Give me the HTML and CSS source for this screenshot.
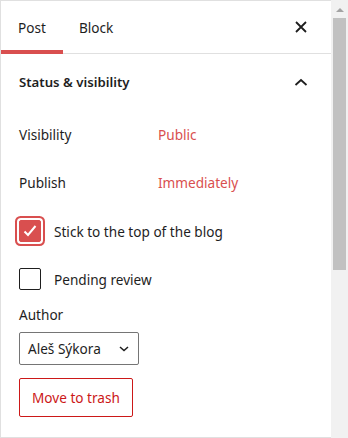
FILE: index.html
```html
<!DOCTYPE html>
<html lang="en">
<head>
    <meta charset="UTF-8">
    <title>Post settings</title>
    <link rel="stylesheet" href="styles.css">
</head>
<body>
    <div class="frame">
        <div class="sidebar">
            <div class="tabs">
                <button class="tab active">Post</button>
                <button class="tab">Block</button>
                <button class="close" aria-label="Close settings">
                    <svg viewBox="0 0 12 12" width="12" height="12"><path d="M1 1l10 10M11 1L1 11"/></svg>
                </button>
            </div>

            <div class="panel">
                <div class="panel-title">
                    <span>Status &amp; visibility</span>
                    <svg viewBox="0 0 14 8" width="14" height="8"><path d="M1.5 7L7 2l5.5 5"/></svg>
                </div>

                <div class="row">
                    <span class="label">Visibility</span>
                    <a class="value" href="#">Public</a>
                </div>
                <div class="row">
                    <span class="label">Publish</span>
                    <a class="value" href="#">Immediately</a>
                </div>

                <label class="row check">
                    <span class="box checked">
                        <svg viewBox="0 0 16 16" width="16" height="16"><path d="M2.5 8.5l3.5 3.5 7.5-9"/></svg>
                    </span>
                    <span>Stick to the top of the blog</span>
                </label>
                <label class="row check">
                    <span class="box"></span>
                    <span>Pending review</span>
                </label>

                <div class="author">
                    <div class="author-label">Author</div>
                    <div class="select">
                        <span>Aleš Sýkora</span>
                        <svg viewBox="0 0 10 6" width="10" height="6"><path d="M1 1l4 3.6L9 1"/></svg>
                    </div>
                </div>

                <button class="trash">Move to trash</button>
            </div>
        </div>

        <div class="scrollbar">
            <div class="arrow"></div>
            <div class="thumb"></div>
        </div>
    </div>
</body>
</html>
```
FILE: styles.css
```css
:root {
    --red: #d94f4f;
    --danger: #cc1818;
    --text: #1e1e1e;
    --line: #e0e0e0;
}

body {
    margin: 0;
    font-family: 'Noto Sans', sans-serif;
    font-size: 13.6px;
    color: var(--text);
    background: #fff;
}

.frame {
    display: flex;
    width: 348px;
    height: 438px;
}

.sidebar {
    flex: 1;
    border: 1px solid var(--line);
    border-right: 0;
    overflow: hidden;
}

svg {
    fill: none;
    stroke: var(--text);
    stroke-width: 1.8;
}

/* header tabs */
.tabs {
    display: flex;
    align-items: center;
    height: 52px;
    border-bottom: 1px solid var(--line);
}

.tab {
    height: 53px;
    margin-bottom: -1px;
    padding: 0 16px;
    border: 0;
    background: none;
    font: inherit;
    color: var(--text);
}
.tab.active {
    padding: 0 17px;
    box-shadow: inset 0 -4px 0 var(--red);
}

.close {
    margin-left: auto;
    margin-right: 24px;
    padding: 0;
    border: 0;
    background: none;
    display: flex;
}

/* status panel */
.panel {
    padding: 0 18px;
}

.panel-title {
    display: flex;
    justify-content: space-between;
    align-items: center;
    height: 56px;
    font-size: 13.2px;
    font-weight: 600;
}
.panel-title svg {
    margin-right: 5px;
}

.row {
    display: flex;
    align-items: center;
    height: 48px;
}

.label {
    width: 139px;
}

.value {
    color: var(--red);
    text-decoration: none;
}

.check {
    gap: 13px;
}
.check:first-of-type {
    margin-top: 1px;
}

.box {
    width: 20px;
    height: 20px;
    border: 1px solid var(--text);
    border-radius: 2px;
    display: flex;
    align-items: center;
    justify-content: center;
}
.box.checked {
    background: var(--red);
    border-color: var(--red);
    box-shadow: 0 0 0 2px #fff, 0 0 0 4px var(--red);
}
.box.checked svg {
    stroke: #fff;
    stroke-width: 2;
}

.author-label {
    margin-top: 4px;
    line-height: 16px;
}

.select {
    display: flex;
    align-items: center;
    justify-content: space-between;
    width: 101px;
    height: 31px;
    margin-top: 9px;
    padding: 0 9px 0 8px;
    border: 1px solid #757575;
    border-radius: 2px;
}
.select svg {
    stroke-width: 1.5;
}

.trash {
    margin-top: 13px;
    height: 39px;
    padding: 0 12px;
    border: 1px solid var(--danger);
    border-radius: 2px;
    background: #fff;
    font: inherit;
    color: var(--danger);
}

/* fake window scrollbar */
.scrollbar {
    width: 17px;
    background: #f1f1f1;
    display: flex;
    flex-direction: column;
    align-items: center;
}

.arrow {
    margin-top: 8px;
    border: 4px solid transparent;
    border-top: 0;
    border-bottom-color: #a3a3a3;
    width: 0;
    height: 0;
}

.thumb {
    margin-top: 6px;
    width: 13px;
    height: 252px;
    background: #c1c1c1;
}
```
